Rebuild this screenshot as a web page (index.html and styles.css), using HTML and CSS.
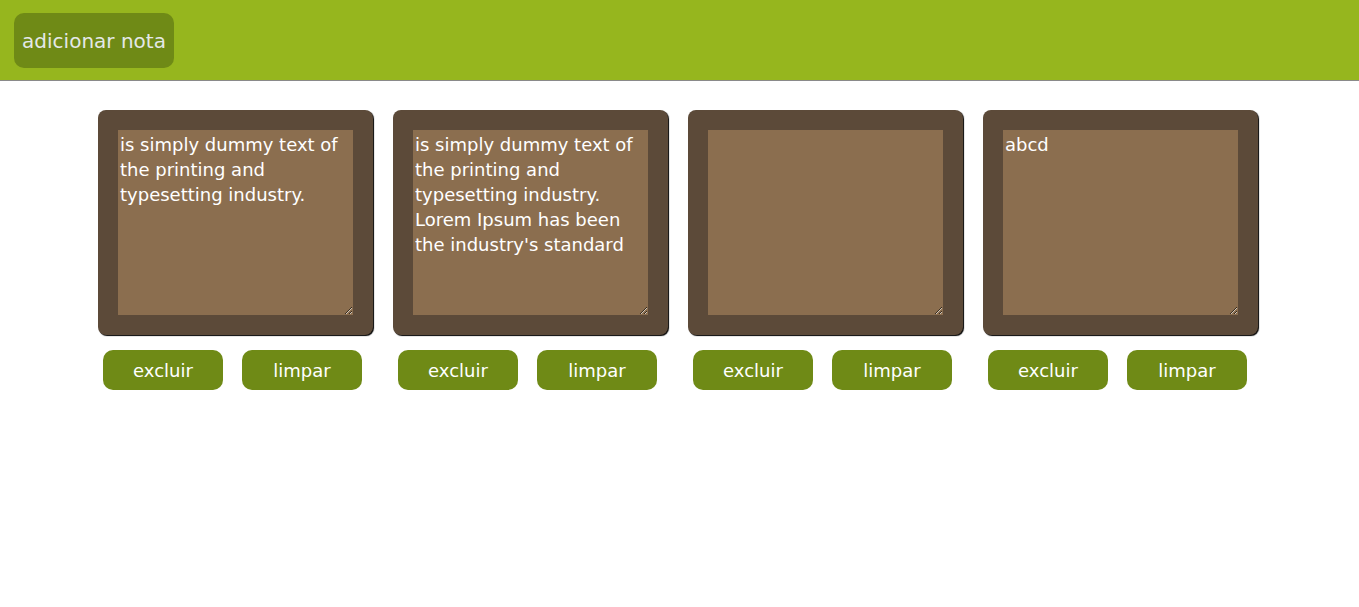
FILE: index.html
```html
<!DOCTYPE html>
<html lang="pt">
<head>
<meta charset="utf-8">
<title>Notas</title>
<link rel="stylesheet" href="styles.css">
</head>
<body>
<header class="topbar">
  <button class="add-btn">adicionar nota</button>
</header>
<main class="notes">
  <div class="note">
    <div class="note-card">
      <textarea class="note-text">is simply dummy text of the printing and typesetting industry.</textarea>
    </div>
    <div class="note-actions">
      <button class="act-btn">excluir</button>
      <button class="act-btn">limpar</button>
    </div>
  </div>
  <div class="note">
    <div class="note-card">
      <textarea class="note-text">is simply dummy text of the printing and typesetting industry. Lorem Ipsum has been the industry's standard</textarea>
    </div>
    <div class="note-actions">
      <button class="act-btn">excluir</button>
      <button class="act-btn">limpar</button>
    </div>
  </div>
  <div class="note">
    <div class="note-card">
      <textarea class="note-text"></textarea>
    </div>
    <div class="note-actions">
      <button class="act-btn">excluir</button>
      <button class="act-btn">limpar</button>
    </div>
  </div>
  <div class="note">
    <div class="note-card">
      <textarea class="note-text">abcd</textarea>
    </div>
    <div class="note-actions">
      <button class="act-btn">excluir</button>
      <button class="act-btn">limpar</button>
    </div>
  </div>
</main>
</body>
</html>
```
FILE: styles.css
```css
* { box-sizing: border-box; }
body {
  margin: 0;
  font-family: "DejaVu Sans", Verdana, sans-serif;
  background: #ffffff;
}
.topbar {
  height: 81px;
  background: #96b61e;
  border-bottom: 1px solid #8a8a8a;
  padding: 13px 14px;
}
.add-btn {
  width: 160px;
  height: 55px;
  border: none;
  border-radius: 10px;
  background: #6f8a16;
  color: #e4e8e8;
  font-family: "DejaVu Sans", Verdana, sans-serif;
  font-size: 20px;
  padding: 0;
}
.notes {
  display: flex;
  justify-content: center;
  gap: 20px;
  padding: 29px 3px 0 0;
}
.note {
  width: 275px;
}
.note-card {
  width: 275px;
  height: 225px;
  background: #5c4a39;
  border-radius: 8px;
  padding: 20px;
  box-shadow: 1px 1px 1px #000;
}
.note-text {
  display: block;
  width: 235px;
  height: 185px;
  margin: 0;
  border: none;
  outline: none;
  background: #8b6e4f;
  color: #ffffff;
  font-family: "DejaVu Sans", Verdana, sans-serif;
  font-size: 18px;
  line-height: 25px;
  padding: 2px;
  resize: both;
}
.note-actions {
  display: flex;
  gap: 19px;
  padding: 15px 0 0 5px;
}
.act-btn {
  width: 120px;
  height: 40px;
  border: none;
  border-radius: 10px;
  background: #6f8a16;
  color: #ffffff;
  font-family: "DejaVu Sans", Verdana, sans-serif;
  font-size: 18px;
  padding: 0;
}
```
